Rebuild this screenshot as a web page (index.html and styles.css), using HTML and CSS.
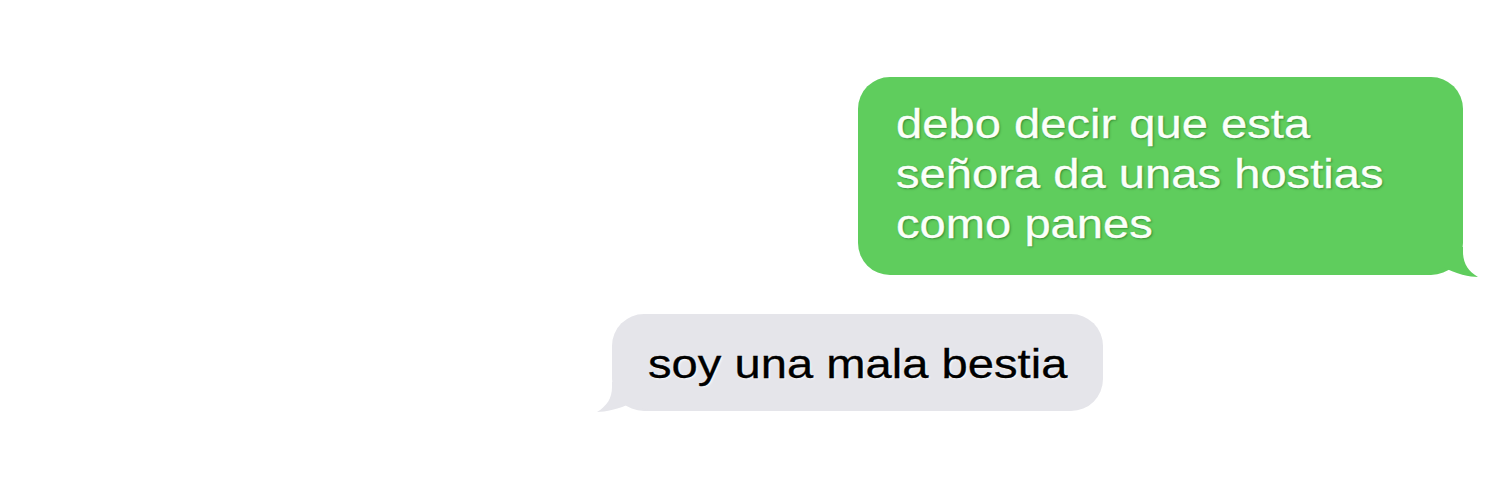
FILE: index.html
```html
<!DOCTYPE html>
<html lang="es">
<head>
<meta charset="utf-8">
<title>Mensajes</title>
<link rel="stylesheet" href="styles.css">
</head>
<body>
<main class="thread">
  <div class="bubble sent">
    <p class="msg">debo decir que esta<br>señora da unas hostias<br>como panes</p>
    <svg class="tail tail-sent" width="60" height="30" viewBox="0 0 60 30">
      <path d="M0 0 H43 V5 C43 16 48 24 58 30 C50 30 36 27 23 20 C17 25 10 28 0 28 Z" fill="#5fcd5d"/>
    </svg>
  </div>
  <div class="bubble received">
    <p class="msg">soy una mala bestia</p>
    <svg class="tail tail-received" width="60" height="30" viewBox="0 0 60 30">
      <path d="M60 0 H15 V5 C15 16 10 24 0 30 C8 30 22 27 35 21 C41 25 48 29 60 29 Z" fill="#e5e5ea"/>
    </svg>
  </div>
</main>
</body>
</html>
```
FILE: styles.css
```css
html, body {
  margin: 0;
  padding: 0;
  background: #ffffff;
}

.thread {
  width: 1500px;
  height: 500px;
  box-sizing: border-box;
  padding-top: 77px;
  display: flex;
  flex-direction: column;
  align-items: flex-end;
  gap: 39px;
  font-family: "Liberation Sans", Arial, Helvetica, sans-serif;
}

.bubble {
  position: relative;
  border-radius: 32px;
}

/* Wide-set message type */
.msg {
  margin: 0;
  font-size: 41px;
  line-height: 50px;
  white-space: nowrap;
  transform: scaleX(1.15);
  transform-origin: left center;
  -webkit-text-stroke: 0.3px currentColor;
}

.sent {
  background: #5fcd5d;
  width: 605px;
  height: 198px;
  box-sizing: border-box;
  margin-right: 37px;
  padding: 22px 20px 0 38px;
  color: #fbfff9;
}

.sent .msg {
  text-shadow: 1px 1px 2px rgba(0, 60, 0, 0.45);
}

.received {
  background: #e5e5ea;
  width: 491px;
  height: 97px;
  box-sizing: border-box;
  margin-right: 397px;
  padding: 25px 10px 0 36px;
  color: #000000;
}

.received .msg {
  text-shadow: 1px 1px 2px rgba(255, 255, 255, 0.9);
}

.tail {
  position: absolute;
  display: block;
}

.tail-sent {
  right: -17px;
  bottom: -2px;
}

.tail-received {
  left: -15px;
  bottom: -1px;
}
```
